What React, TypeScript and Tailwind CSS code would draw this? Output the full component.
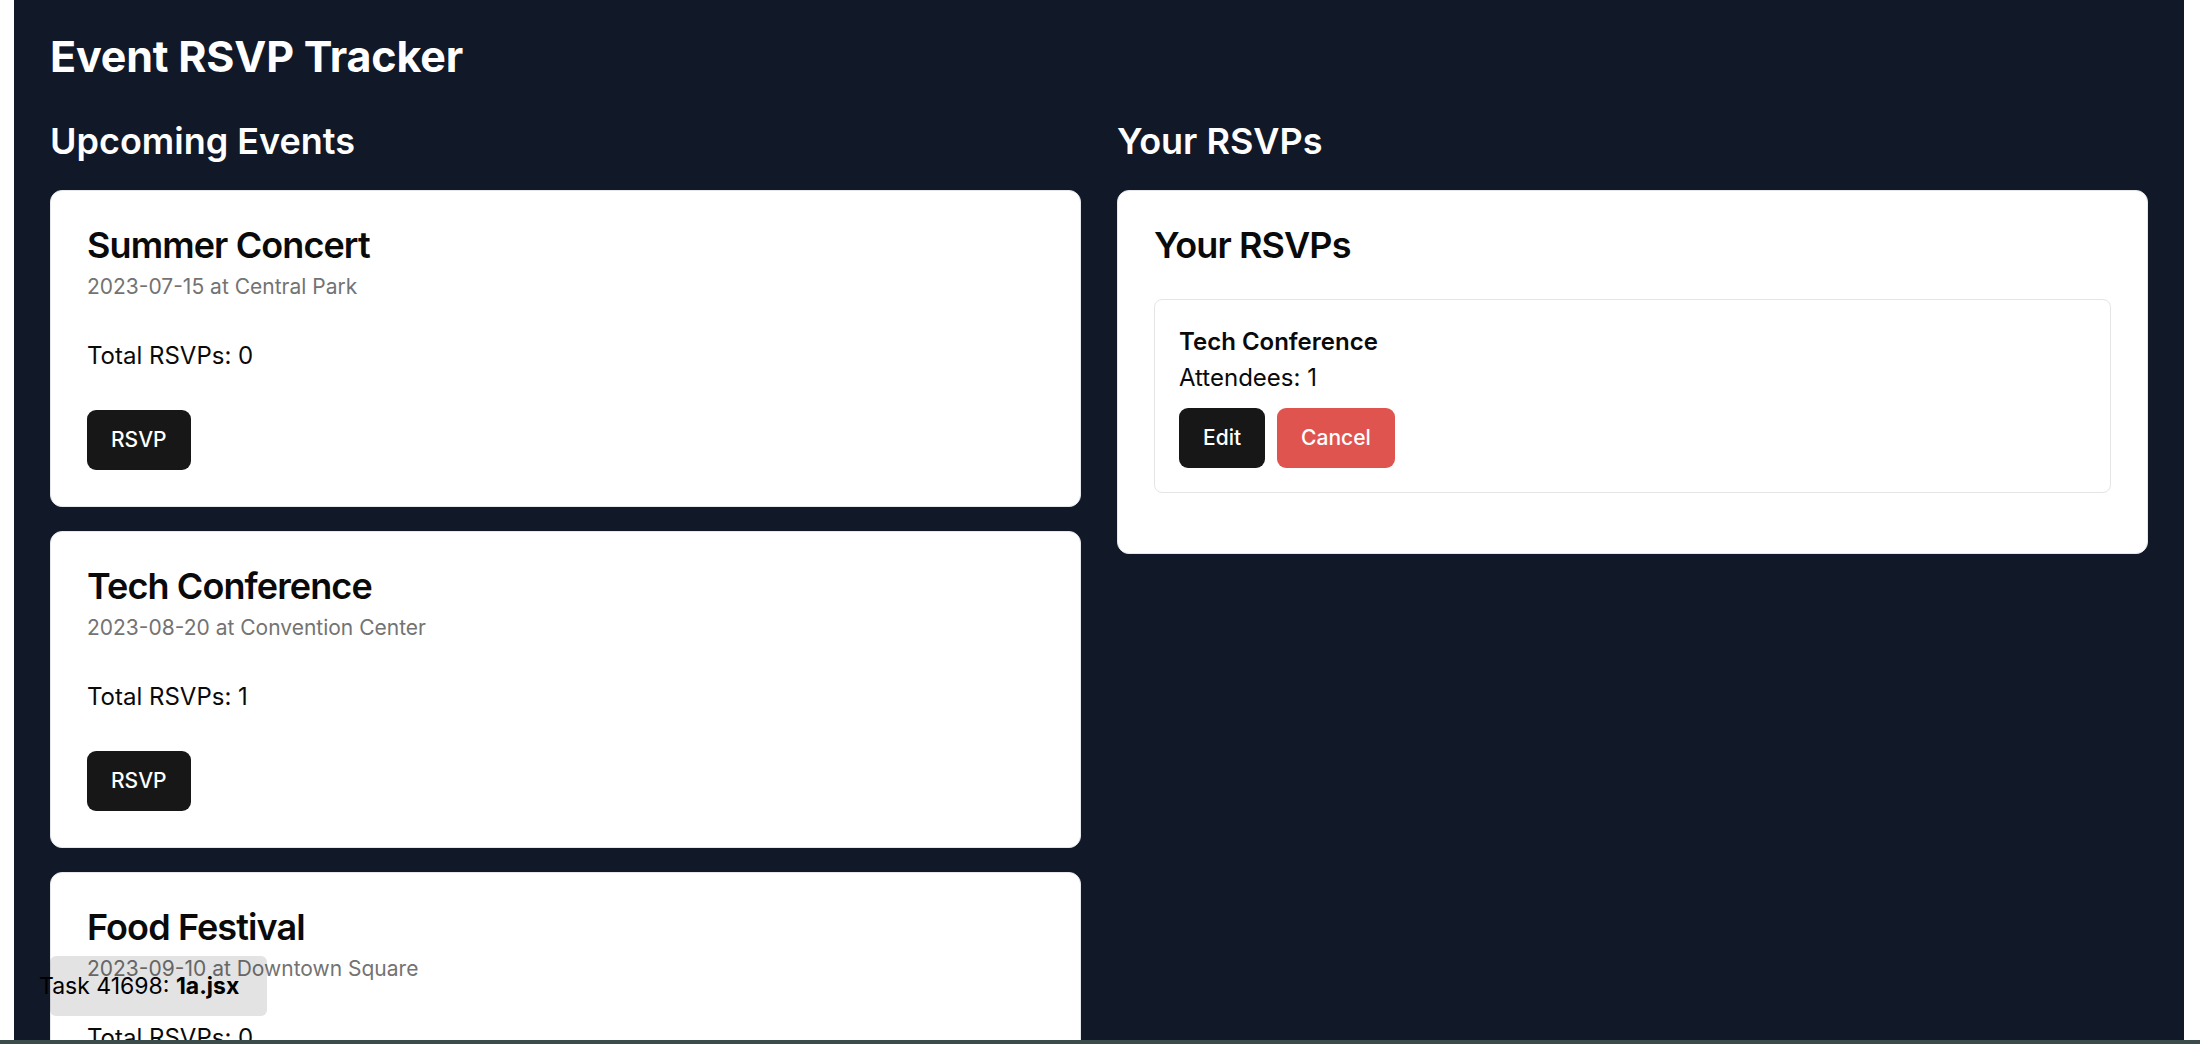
import { useState } from 'react'

interface EventItem {
  id: number
  name: string
  date: string
  location: string
}

interface Rsvp {
  eventId: number
  attendees: number
}

const events: EventItem[] = [
  { id: 1, name: 'Summer Concert', date: '2023-07-15', location: 'Central Park' },
  { id: 2, name: 'Tech Conference', date: '2023-08-20', location: 'Convention Center' },
  { id: 3, name: 'Food Festival', date: '2023-09-10', location: 'Downtown Square' },
]

export default function App() {
  const [rsvps, setRsvps] = useState<Rsvp[]>([{ eventId: 2, attendees: 1 }])

  const totalFor = (eventId: number) =>
    rsvps.filter((r) => r.eventId === eventId).reduce((sum, r) => sum + r.attendees, 0)

  const addRsvp = (eventId: number) => {
    if (rsvps.some((r) => r.eventId === eventId)) return
    setRsvps([...rsvps, { eventId, attendees: 1 }])
  }

  const cancelRsvp = (eventId: number) => {
    setRsvps(rsvps.filter((r) => r.eventId !== eventId))
  }

  return (
    <div className="relative h-screen overflow-hidden bg-white pl-[14px] pr-[16px] font-['Inter',sans-serif]">
      <div className="min-h-full bg-[#111827] px-[36px] pt-[34px] pb-[36px]">
        <h1 className="mb-[39px] text-[43px] font-bold leading-[44px] tracking-[-0.2px] text-white">
          Event RSVP Tracker
        </h1>

        <div className="grid grid-cols-2 gap-[36px]">
          {/* Events list */}
          <div>
            <h2 className="mb-[25px] text-[36px] font-semibold leading-[48px] text-white">Upcoming Events</h2>
            <div className="flex flex-col gap-[24px]">
              {events.map((event) => (
                <EventCard
                  key={event.id}
                  event={event}
                  total={totalFor(event.id)}
                  onRsvp={() => addRsvp(event.id)}
                />
              ))}
            </div>
          </div>

          {/* User RSVPs */}
          <div>
            <h2 className="mb-[25px] text-[36px] font-semibold leading-[48px] text-white">Your RSVPs</h2>
            <div className="rounded-[12px] border border-[#e5e7eb] bg-white text-[#0a0a0a]">
              <div className="p-[36px]">
                <h3 className="text-[36px] font-semibold leading-none tracking-tight">Your RSVPs</h3>
              </div>
              <div className="px-[36px] pb-[36px]">
                {rsvps.map((rsvp) => {
                  const event = events.find((e) => e.id === rsvp.eventId)
                  if (!event) return null
                  return (
                    <div key={rsvp.eventId} className="mb-[24px] rounded-[8px] border border-[#e5e5e5] p-[24px]">
                      <p className="text-[24px] font-semibold leading-[36px]">{event.name}</p>
                      <p className="text-[24px] leading-[36px]">Attendees: {rsvp.attendees}</p>
                      <div className="mt-[12px] flex gap-[12px]">
                        <button className="h-[60px] rounded-[9px] bg-[#171717] px-[24px] text-[21px] font-medium text-white">
                          Edit
                        </button>
                        <button
                          onClick={() => cancelRsvp(rsvp.eventId)}
                          className="h-[60px] rounded-[9px] bg-[#e0544f] px-[24px] text-[21px] font-medium text-white"
                        >
                          Cancel
                        </button>
                      </div>
                    </div>
                  )
                })}
              </div>
            </div>
          </div>
        </div>
      </div>

      {/* file label overlay */}
      <div className="absolute left-[50px] top-[956px] h-[60px] w-[217px] rounded-[6px] bg-black/[0.11]" />
      <div className="absolute left-[39px] top-[972px] text-[23px] leading-[28px] text-black">
        Task 41698: <span className="font-bold">1a.jsx</span>
      </div>

      <div className="absolute bottom-0 left-0 h-[4px] w-full bg-[#3b4a4a]" />
    </div>
  )
}

function EventCard({ event, total, onRsvp }: { event: EventItem; total: number; onRsvp: () => void }) {
  return (
    <div className="rounded-[12px] border border-[#e5e7eb] bg-white text-[#0a0a0a]">
      <div className="flex flex-col gap-[9px] p-[36px]">
        <h3 className="text-[36px] font-semibold leading-none tracking-tight">{event.name}</h3>
        <p className="text-[21px] leading-[30px] text-[#737373]">
          {event.date} at {event.location}
        </p>
      </div>
      <div className="px-[36px] pb-[36px]">
        <p className="text-[24px] leading-[36px]">Total RSVPs: {total}</p>
      </div>
      <div className="flex items-center px-[36px] pb-[36px]">
        <button
          onClick={onRsvp}
          className="h-[60px] rounded-[9px] bg-[#171717] px-[24px] text-[21px] font-medium text-white"
        >
          RSVP
        </button>
      </div>
    </div>
  )
}
